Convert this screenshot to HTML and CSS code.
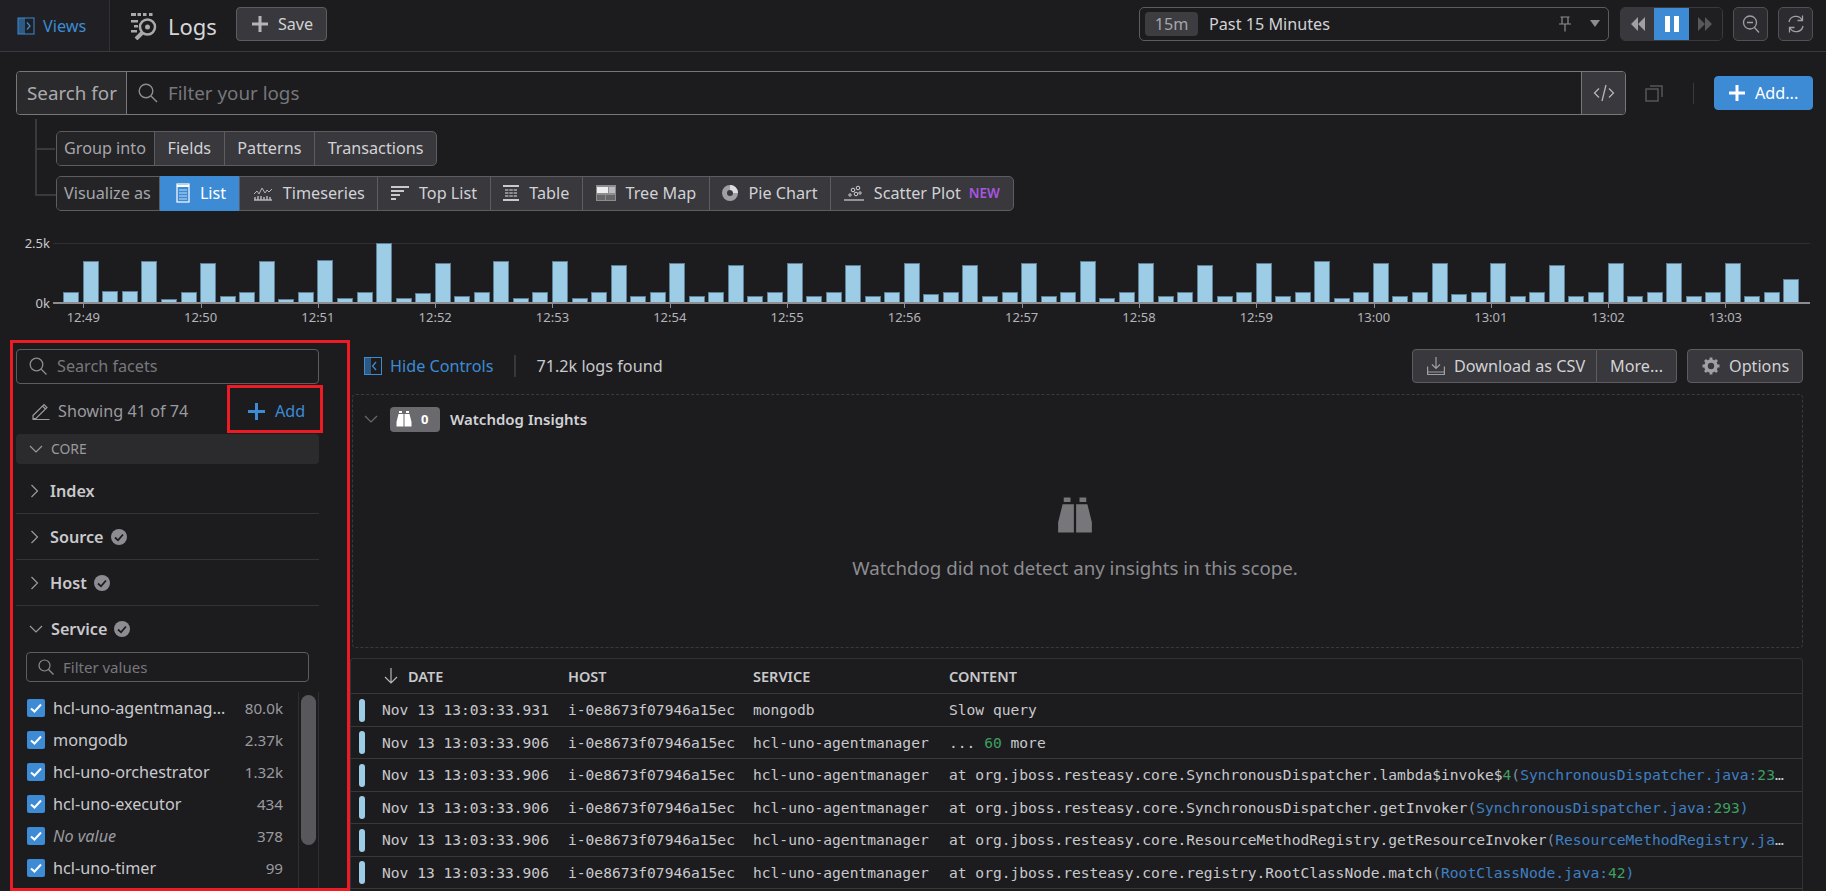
FILE: index.html
```html
<!DOCTYPE html>
<html lang="en">
<head>
<meta charset="utf-8">
<title>Logs</title>
<link rel="stylesheet" href="styles.css">
</head>
<body>
<header class="topbar">
  <a class="views">
    <svg class="ic" width="18" height="18" viewBox="0 0 18 18"><rect x="1" y="1" width="16" height="16" fill="none" stroke="#3d8bd4"/><rect x="1" y="1" width="7" height="16" fill="#3d8bd4" opacity=".55"/><path d="M10 5.500l3 3.500-3 3.500" fill="none" stroke="#3d8bd4" stroke-width="1.300"/></svg>
    <span>Views</span>
  </a>
  <div class="title">
    <svg width="28" height="28" viewBox="0 0 28 28" fill="#a9a9ad"><rect x="1" y="1" width="5" height="3"/><rect x="7.500" y="1" width="3.500" height="3"/><rect x="13" y="1" width="3.500" height="3"/><rect x="19" y="1" width="3.500" height="3"/><rect x="1" y="8" width="7" height="2.500"/><rect x="4" y="13" width="4" height="2.500"/><rect x="1" y="18" width="6" height="2.500"/><circle cx="17.500" cy="15" r="7.500" fill="none" stroke="#a9a9ad" stroke-width="2.500"/><circle cx="17.500" cy="15" r="2.500"/><path d="M12 21l-6 6" stroke="#a9a9ad" stroke-width="4"/></svg>
    <h1>Logs</h1>
  </div>
  <button class="btn save"><svg width="18" height="18" viewBox="0 0 18 18"><path d="M9 1v16M1 9h16" stroke="#b5b5b8" stroke-width="3"/></svg>Save</button>
  <div class="spacer"></div>
  <div class="timepicker">
    <span class="pill">15m</span>
    <span class="tp-text">Past 15 Minutes</span>
    <svg width="14" height="16" viewBox="0 0 14 16"><path d="M2.500 1h9M4 1.500v6M10 1.500v6M1 8h12M7 8v7.500" fill="none" stroke="#8d8d91" stroke-width="1.200"/></svg>
    <span class="caret"></span>
  </div>
  <div class="transport">
    <span class="t-btn"><svg width="16" height="14" viewBox="0 0 16 14" fill="#a0a0a4"><path d="M8 0v14L1 7zM15 0v14L8 7z"/></svg></span>
    <span class="t-btn on"><svg width="14" height="16" viewBox="0 0 14 16" fill="#fff"><rect width="5" height="16"/><rect x="9" width="5" height="16"/></svg></span>
    <span class="t-btn off"><svg width="16" height="14" viewBox="0 0 16 14" fill="#58585c"><path d="M8 0v14l7-7zM1 0v14l7-7z"/></svg></span>
  </div>
  <span class="icon-btn"><svg width="18" height="20" viewBox="0 0 18 20" fill="none" stroke="#a0a0a4" stroke-width="1.300"><circle cx="8" cy="8.500" r="6.500"/><path d="M5 8.500h6M12.500 13.500l4.500 5"/></svg></span>
  <span class="icon-btn last"><svg width="18" height="20" viewBox="0 0 18 20" fill="none" stroke="#a0a0a4" stroke-width="1.300"><path d="M2 8a7 7 0 0 1 13-2M16 12a7 7 0 0 1-13 2M15.500 1.500V6.500H10.500M2.500 18.500V13.500H7.500"/></svg></span>
</header>

<section class="query">
  <div class="searchrow">
    <div class="searchbox">
      <span class="sb-label">Search for</span>
      <div class="sb-input">
        <svg width="20" height="20" viewBox="0 0 20 20" fill="none" stroke="#8d8d91" stroke-width="1.400"><circle cx="8" cy="8" r="6.800"/><path d="M13 13l6 6"/></svg>
        <span>Filter your logs</span>
      </div>
      <span class="sb-code"><svg width="22" height="18" viewBox="0 0 22 18" fill="none" stroke="#b5b5b8" stroke-width="1.300"><path d="M6 4.500L1.500 9 6 13.500M16 4.500L20.500 9 16 13.500M13 1L9 17"/></svg></span>
    </div>
    <svg class="copy" width="18" height="18" viewBox="0 0 18 18" fill="none" stroke="#55555a" stroke-width="1.500"><rect x="1" y="5" width="12" height="12"/><path d="M5 2h12v11"/></svg>
    <span class="vsep"></span>
    <button class="btn primary"><svg width="18" height="18" viewBox="0 0 18 18"><path d="M9 1v16M1 9h16" stroke="#fff" stroke-width="3"/></svg>Add...</button>
  </div>
  <div class="tree">
    <div class="seg">
      <span class="seg-label">Group into</span>
      <span class="seg-item">Fields</span>
      <span class="seg-item">Patterns</span>
      <span class="seg-item">Transactions</span>
    </div>
    <div class="seg">
      <span class="seg-label">Visualize as</span>
      <span class="seg-item on"><svg width="14" height="20" viewBox="0 0 14 20"><rect x="1" y="1" width="12" height="18" fill="none" stroke="#fff" stroke-width="1.200"/><path d="M1 3h12" stroke="#fff" stroke-width="2"/><path d="M3 7h8M3 10h8M3 13h8M3 16h8" stroke="#fff" stroke-opacity=".7"/></svg>List</span>
      <span class="seg-item"><svg width="20" height="16" viewBox="0 0 20 16"><path d="M1 9l3-3 2 3 3-6 3 5 2-3 2 2 3-3" fill="none" stroke="#b5b5b8"/><path d="M1 15h18M2 15v-3M5 15v-4M8 15v-4M11 15v-3M14 15v-4M17 15v-3" stroke="#b5b5b8" stroke-width="1.500"/></svg>Timeseries</span>
      <span class="seg-item"><svg width="18" height="16" viewBox="0 0 18 16"><path d="M0 2h18M0 6h13M0 10h9M0 14h5" stroke="#c9c9cc" stroke-width="2"/></svg>Top List</span>
      <span class="seg-item"><svg width="16" height="16" viewBox="0 0 16 16"><path d="M0 1h16M0 15h16" stroke="#c9c9cc" stroke-width="2"/><path d="M2 5h12M2 8h12M2 11h12" stroke="#8d8d91" stroke-width="2" stroke-dasharray="3.500 .8"/></svg>Table</span>
      <span class="seg-item"><svg width="20" height="16" viewBox="0 0 20 16"><rect width="20" height="16" fill="#8d8d91"/><rect x="1" y="2" width="11" height="6" fill="#eee"/><rect x="13" y="2" width="6" height="6" fill="#bbb"/><rect x="1" y="10" width="8" height="5" fill="#666"/><rect x="10" y="10" width="9" height="5" fill="#666"/></svg>Tree Map</span>
      <span class="seg-item"><svg width="16" height="16" viewBox="0 0 16 16"><circle cx="8" cy="8" r="5.500" fill="none" stroke="#a0a0a4" stroke-width="5"/><path d="M8 0a8 8 0 0 1 8 8h-5a3 3 0 0 0-3-3z" fill="#ddd"/></svg>Pie Chart</span>
      <span class="seg-item"><svg width="20" height="16" viewBox="0 0 20 16" fill="none" stroke="#d2d2d5"><path d="M0 15h20" stroke-width="1.200"/><circle cx="9" cy="5" r="1.800"/><circle cx="14" cy="3" r="1.800"/><circle cx="12" cy="9" r="1.800"/><circle cx="6" cy="10" r="1.200"/><circle cx="16" cy="8" r="1.200"/></svg>Scatter Plot<b class="new">NEW</b></span>
    </div>
  </div>
</section>

<section class="chart">
  <div class="plotwrap">
    <div class="yaxis"><span>2.5k</span><span>0k</span></div>
    <div class="plot">
      <div class="bar" style="height:10px"></div><div class="bar" style="height:41px"></div><div class="bar" style="height:11px"></div><div class="bar" style="height:11px"></div><div class="bar" style="height:41px"></div><div class="bar" style="height:3px"></div>
      <div class="bar" style="height:10px"></div><div class="bar" style="height:39px"></div><div class="bar" style="height:6px"></div><div class="bar" style="height:10px"></div><div class="bar" style="height:41px"></div><div class="bar" style="height:3px"></div>
      <div class="bar" style="height:10px"></div><div class="bar" style="height:42px"></div><div class="bar" style="height:4px"></div><div class="bar" style="height:10px"></div><div class="bar" style="height:59px"></div><div class="bar" style="height:4px"></div>
      <div class="bar" style="height:9px"></div><div class="bar" style="height:39px"></div><div class="bar" style="height:6px"></div><div class="bar" style="height:10px"></div><div class="bar" style="height:41px"></div><div class="bar" style="height:4px"></div>
      <div class="bar" style="height:10px"></div><div class="bar" style="height:41px"></div><div class="bar" style="height:4px"></div><div class="bar" style="height:10px"></div><div class="bar" style="height:37px"></div><div class="bar" style="height:6px"></div>
      <div class="bar" style="height:10px"></div><div class="bar" style="height:39px"></div><div class="bar" style="height:6px"></div><div class="bar" style="height:10px"></div><div class="bar" style="height:37px"></div><div class="bar" style="height:6px"></div>
      <div class="bar" style="height:10px"></div><div class="bar" style="height:39px"></div><div class="bar" style="height:6px"></div><div class="bar" style="height:10px"></div><div class="bar" style="height:37px"></div><div class="bar" style="height:6px"></div>
      <div class="bar" style="height:10px"></div><div class="bar" style="height:39px"></div><div class="bar" style="height:8px"></div><div class="bar" style="height:10px"></div><div class="bar" style="height:37px"></div><div class="bar" style="height:6px"></div>
      <div class="bar" style="height:10px"></div><div class="bar" style="height:39px"></div><div class="bar" style="height:6px"></div><div class="bar" style="height:10px"></div><div class="bar" style="height:41px"></div><div class="bar" style="height:4px"></div>
      <div class="bar" style="height:10px"></div><div class="bar" style="height:39px"></div><div class="bar" style="height:6px"></div><div class="bar" style="height:10px"></div><div class="bar" style="height:37px"></div><div class="bar" style="height:6px"></div>
      <div class="bar" style="height:10px"></div><div class="bar" style="height:39px"></div><div class="bar" style="height:6px"></div><div class="bar" style="height:10px"></div><div class="bar" style="height:41px"></div><div class="bar" style="height:4px"></div>
      <div class="bar" style="height:10px"></div><div class="bar" style="height:39px"></div><div class="bar" style="height:6px"></div><div class="bar" style="height:10px"></div><div class="bar" style="height:39px"></div><div class="bar" style="height:8px"></div>
      <div class="bar" style="height:10px"></div><div class="bar" style="height:39px"></div><div class="bar" style="height:6px"></div><div class="bar" style="height:10px"></div><div class="bar" style="height:37px"></div><div class="bar" style="height:6px"></div>
      <div class="bar" style="height:10px"></div><div class="bar" style="height:39px"></div><div class="bar" style="height:6px"></div><div class="bar" style="height:10px"></div><div class="bar" style="height:39px"></div><div class="bar" style="height:6px"></div>
      <div class="bar" style="height:10px"></div><div class="bar" style="height:39px"></div><div class="bar" style="height:6px"></div><div class="bar" style="height:10px"></div><div class="bar" style="height:23px"></div>
    </div>
  </div>
  <div class="ticks">
    <span>12:49</span><span>12:50</span><span>12:51</span><span>12:52</span><span>12:53</span><span>12:54</span><span>12:55</span><span>12:56</span><span>12:57</span><span>12:58</span><span>12:59</span><span>13:00</span><span>13:01</span><span>13:02</span><span>13:03</span>
  </div>
</section>

<main class="main">
  <aside class="facets">
    <div class="f-search">
      <svg width="18" height="18" viewBox="0 0 18 18" fill="none" stroke="#8d8d91" stroke-width="1.300"><circle cx="7.500" cy="7.500" r="6.300"/><path d="M12 12l5.500 5.500"/></svg>
      <span>Search facets</span>
    </div>
    <div class="f-head">
      <div class="f-showing">
        <svg width="18" height="18" viewBox="0 0 18 18" fill="none" stroke="#9a9a9e" stroke-width="1.200"><path d="M1 13.500L12 2.500l3 3L4 16.500H1zM10.500 4l3 3M.5 17.500h17"/></svg>
        <span>Showing 41 of 74</span>
      </div>
      <button class="f-add"><svg width="17" height="17" viewBox="0 0 17 17"><path d="M8.500 0v17M0 8.500h17" stroke="#3d8bd4" stroke-width="3"/></svg>Add</button>
    </div>
    <div class="f-group"><svg class="chev" width="14" height="14" viewBox="0 0 14 14"><path d="M1 4l6 6 6-6" fill="none" stroke="#9a9a9e" stroke-width="1.200"/></svg>CORE</div>
    <div class="facet first"><svg class="chevr" width="14" height="14" viewBox="0 0 14 14"><path d="M3.500 1l6 6-6 6" fill="none" stroke="#9a9a9e" stroke-width="1.200"/></svg><b>Index</b></div>
    <div class="facet"><svg class="chevr" width="14" height="14" viewBox="0 0 14 14"><path d="M3.500 1l6 6-6 6" fill="none" stroke="#9a9a9e" stroke-width="1.200"/></svg><b>Source</b><svg width="16" height="16" viewBox="0 0 16 16"><circle cx="8" cy="8" r="8" fill="#8d8d91"/><path d="M4 8.500l3 2.800 5-5.800" fill="none" stroke="#1c1c1f" stroke-width="1.800"/></svg></div>
    <div class="facet"><svg class="chevr" width="14" height="14" viewBox="0 0 14 14"><path d="M3.500 1l6 6-6 6" fill="none" stroke="#9a9a9e" stroke-width="1.200"/></svg><b>Host</b><svg width="16" height="16" viewBox="0 0 16 16"><circle cx="8" cy="8" r="8" fill="#8d8d91"/><path d="M4 8.500l3 2.800 5-5.800" fill="none" stroke="#1c1c1f" stroke-width="1.800"/></svg></div>
    <div class="facet open"><svg class="chev" width="14" height="14" viewBox="0 0 14 14"><path d="M1 4l6 6 6-6" fill="none" stroke="#9a9a9e" stroke-width="1.200"/></svg><b>Service</b><svg width="16" height="16" viewBox="0 0 16 16"><circle cx="8" cy="8" r="8" fill="#8d8d91"/><path d="M4 8.500l3 2.800 5-5.800" fill="none" stroke="#1c1c1f" stroke-width="1.800"/></svg></div>
    <div class="f-filter">
      <svg width="16" height="16" viewBox="0 0 16 16" fill="none" stroke="#8d8d91" stroke-width="1.200"><circle cx="6.500" cy="6.500" r="5.500"/><path d="M10.500 10.500l5 5"/></svg>
      <span>Filter values</span>
    </div>
    <div class="f-values">
      <ul class="f-list">
        <li><span class="cb"><svg width="18" height="18" viewBox="0 0 18 18"><path d="M4 9.500l3.500 3L14 5.500" fill="none" stroke="#fff" stroke-width="2"/></svg></span><span class="name">hcl-uno-agentmanager</span><span class="count">80.0k</span></li>
        <li><span class="cb"><svg width="18" height="18" viewBox="0 0 18 18"><path d="M4 9.500l3.500 3L14 5.500" fill="none" stroke="#fff" stroke-width="2"/></svg></span><span class="name">mongodb</span><span class="count">2.37k</span></li>
        <li><span class="cb"><svg width="18" height="18" viewBox="0 0 18 18"><path d="M4 9.500l3.500 3L14 5.500" fill="none" stroke="#fff" stroke-width="2"/></svg></span><span class="name">hcl-uno-orchestrator</span><span class="count">1.32k</span></li>
        <li><span class="cb"><svg width="18" height="18" viewBox="0 0 18 18"><path d="M4 9.500l3.500 3L14 5.500" fill="none" stroke="#fff" stroke-width="2"/></svg></span><span class="name">hcl-uno-executor</span><span class="count">434</span></li>
        <li><span class="cb"><svg width="18" height="18" viewBox="0 0 18 18"><path d="M4 9.500l3.500 3L14 5.500" fill="none" stroke="#fff" stroke-width="2"/></svg></span><span class="name novalue">No value</span><span class="count">378</span></li>
        <li><span class="cb"><svg width="18" height="18" viewBox="0 0 18 18"><path d="M4 9.500l3.500 3L14 5.500" fill="none" stroke="#fff" stroke-width="2"/></svg></span><span class="name">hcl-uno-timer</span><span class="count">99</span></li>
      </ul>
      <div class="f-rail"><div class="f-thumb"></div></div>
    </div>
  </aside>

  <div class="results">
    <div class="r-bar">
      <a class="hide"><svg width="18" height="18" viewBox="0 0 18 18"><rect x=".5" y=".5" width="17" height="17" fill="none" stroke="#3d8bd4"/><rect x="1" y="1" width="6" height="16" fill="#3d8bd4" opacity=".55"/><path d="M12 5l-3.500 4 3.500 4" fill="none" stroke="#3d8bd4" stroke-width="1.300"/></svg>Hide Controls</a>
      <span class="r-sep"></span>
      <span class="found">71.2k logs found</span>
      <div class="spacer"></div>
      <div class="split">
        <button class="btn"><svg width="18" height="18" viewBox="0 0 18 18" fill="none" stroke="#a0a0a4" stroke-width="1.200"><path d="M9 0v11M5 7.500l4 4 4-4M.6 9.500v8h16.800v-8M.6 15h16.800"/></svg>Download as CSV</button>
        <button class="btn">More...</button>
      </div>
      <button class="btn"><svg width="18" height="18" viewBox="0 0 18 18"><circle cx="9" cy="9" r="5" fill="none" stroke="#a0a0a4" stroke-width="3.600"/><path d="M9 .5v17M.5 9h17M3 3l12 12M15 3L3 15" stroke="#a0a0a4" stroke-width="2.800" stroke-dasharray="2.800 11.500"/></svg>Options</button>
    </div>
    <section class="insights">
      <div class="ins-head">
        <svg width="14" height="14" viewBox="0 0 14 14"><path d="M1 4l6 6 6-6" fill="none" stroke="#6a6a6e" stroke-width="1.200"/></svg>
        <span class="ins-badge"><svg width="16" height="16" viewBox="0 0 16 16" fill="#fff"><path d="M3 0h3v2H3zM10 0h3v2h-3zM2.500 3h5v12.500H.5V11zM8.500 3h5l2 8v4.500h-7z"/></svg>0</span>
        <b>Watchdog Insights</b>
      </div>
      <div class="ins-empty">
        <svg width="36" height="37" viewBox="0 0 16 16" fill="#77777b"><path d="M3 0h3v2H3zM10 0h3v2h-3zM2.500 3h5v12.500H.5V11zM8.500 3h5l2 8v4.500h-7z"/></svg>
        <p>Watchdog did not detect any insights in this scope.</p>
      </div>
    </section>
    <section class="table">
      <div class="row head"><span class="h-date"><svg width="14" height="16" viewBox="0 0 14 16" fill="none" stroke="#b5b5b8" stroke-width="1.200"><path d="M7 0v15M1 9l6 6 6-6"/></svg>DATE</span><span>HOST</span><span>SERVICE</span><span>CONTENT</span></div>
      <div class="row log"><i class="st"></i><span>Nov 13 13:03:33.931</span><span>i-0e8673f07946a15ec</span><span>mongodb</span><span class="msg">Slow query</span></div>
      <div class="row log"><i class="st"></i><span>Nov 13 13:03:33.906</span><span>i-0e8673f07946a15ec</span><span>hcl-uno-agentmanager</span><span class="msg">... <em class="num">60</em> more</span></div>
      <div class="row log"><i class="st"></i><span>Nov 13 13:03:33.906</span><span>i-0e8673f07946a15ec</span><span>hcl-uno-agentmanager</span><span class="msg">at org.jboss.resteasy.core.SynchronousDispatcher.lambda$invoke$<em class="num">4</em><em class="par">(</em><em class="cls">SynchronousDispatcher.java:</em><em class="num">236</em><em class="cls">)</em></span></div>
      <div class="row log"><i class="st"></i><span>Nov 13 13:03:33.906</span><span>i-0e8673f07946a15ec</span><span>hcl-uno-agentmanager</span><span class="msg">at org.jboss.resteasy.core.SynchronousDispatcher.getInvoker<em class="par">(</em><em class="cls">SynchronousDispatcher.java:</em><em class="num">293</em><em class="cls">)</em></span></div>
      <div class="row log"><i class="st"></i><span>Nov 13 13:03:33.906</span><span>i-0e8673f07946a15ec</span><span>hcl-uno-agentmanager</span><span class="msg">at org.jboss.resteasy.core.ResourceMethodRegistry.getResourceInvoker<em class="par">(</em><em class="cls">ResourceMethodRegistry.java:</em><em class="num">114</em><em class="cls">)</em></span></div>
      <div class="row log"><i class="st"></i><span>Nov 13 13:03:33.906</span><span>i-0e8673f07946a15ec</span><span>hcl-uno-agentmanager</span><span class="msg">at org.jboss.resteasy.core.registry.RootClassNode.match<em class="par">(</em><em class="cls">RootClassNode.java:</em><em class="num">42</em><em class="cls">)</em></span></div>
    </section>
  </div>
</main>
</body>
</html>
```

FILE: styles.css
```css
* { box-sizing: border-box; }
html, body { margin: 0; padding: 0; }
body {
  width: 1826px; height: 891px; overflow: hidden;
  background: #1c1c1f; color: #c9c9cc;
  font-family: "Noto Sans", sans-serif; font-size: 16.2px; line-height: 20px;
}
h1, p, ul { margin: 0; padding: 0; }
ul { list-style: none; }
em { font-style: normal; }
svg { display: block; flex: none; }
.spacer { flex: 1; }
button { font: inherit; color: inherit; cursor: pointer; }

.btn {
  display: inline-flex; align-items: center; gap: 9px;
  height: 34px; padding: 0 14px;
  background: #38383d; border: 1px solid #5c5c61; border-radius: 4px; color: #d2d2d5;
}

/* top bar */
.topbar { display: flex; align-items: center; height: 52px; border-bottom: 1px solid #3a3a3e; padding-right: 13px; }
.views { display: flex; align-items: center; gap: 8px; width: 110px; height: 51px; padding-left: 17px; background: #1f1f24; border-right: 1px solid #323236; color: #3d8bd4; }
.title { display: flex; align-items: center; gap: 10px; margin-left: 20px; color: #d6d6d9; }
.title h1 { font-size: 22px; font-weight: 400; }
.save { margin-left: 19px; width: 91px; padding: 0 14px; margin-top: -4px; }
.timepicker { display: flex; align-items: center; width: 470px; height: 34px; margin-top: -4px; padding: 0 8px 0 5px; border: 1px solid #5c5c61; border-radius: 5px; }
.pill { width: 53px; height: 24px; line-height: 24px; text-align: center; background: #3c3c41; border-radius: 4px; color: #a6a6aa; }
.tp-text { flex: 1; margin-left: 11px; color: #d2d2d5; }
.caret { width: 0; height: 0; margin-left: 18px; border: 5.500px solid transparent; border-top: 7px solid #8d8d91; border-bottom: 0; }
.transport { display: flex; width: 103px; height: 34px; margin: -4px 0 0 11px; border: 1px solid #3a3a3e; border-radius: 5px; overflow: hidden; }
.t-btn { display: flex; align-items: center; justify-content: center; width: 34px; background: #38383d; }
.t-btn.on { width: 35px; background: #3d8bd4; }
.t-btn.off { background: #1f1f22; }
.icon-btn { display: flex; align-items: center; justify-content: center; width: 35px; height: 34px; margin: -4px 0 0 10px; background: #2c2c30; border: 1px solid #505055; border-radius: 5px; }

/* query */
.query { padding: 19px 13px 0 16px; height: 191px; }
.searchrow { display: flex; align-items: center; }
.searchbox { display: flex; width: 1610px; height: 44px; border: 1px solid #77777b; border-radius: 4px; }
.sb-label { display: flex; align-items: center; width: 110px; padding-left: 10px; font-size: 18.8px; background: #2a2a2d; border-right: 1px solid #77777b; border-radius: 3px 0 0 3px; color: #aaaaae; }
.sb-input { flex: 1; display: flex; align-items: center; gap: 10px; padding-left: 11px; font-size: 18.8px; color: #77777b; }
.sb-code { display: flex; align-items: center; justify-content: center; width: 44px; background: #38383d; border-left: 1px solid #77777b; border-radius: 0 3px 3px 0; }
.copy { margin-left: 19px; }
.vsep { width: 1px; height: 21px; margin-left: 30px; background: #3a3a3e; }
.primary { width: 99px; margin-left: 20px; padding: 0 0 0 13px; gap: 9px; background: #3d8bd4; border-color: #3d8bd4; color: #fff; }

.tree { position: relative; margin: 16px 0 0 40px; display: flex; flex-direction: column; gap: 10px; align-items: flex-start; }
.tree::before { content: ""; position: absolute; left: -21px; top: -12px; width: 19px; height: 75px; border-left: 2px solid #3a3a3e; border-bottom: 2px solid #3a3a3e; }
.seg { position: relative; display: flex; height: 35px; border: 1px solid #5c5c61; border-radius: 5px; background: #38383d; }
.seg:first-child::before { content: ""; position: absolute; left: -20px; top: 16px; width: 18px; height: 2px; background: #3a3a3e; }
.seg-label { display: flex; align-items: center; padding: 0 8px 1px 7px; color: #a6a6aa; background: #242427; border-right: 1px solid #5c5c61; border-radius: 4px 0 0 4px; }
.seg-item { display: flex; align-items: center; gap: 10px; padding: 0 12.6px 1px; color: #d2d2d5; border-right: 1px solid #5c5c61; }
.seg-item:last-child { border-right: 0; border-radius: 0 4px 4px 0; }
.seg-item.on { background: #3d8bd4; color: #fff; padding: 0 13px 1px 16px; margin: -1px 0; }
.new { margin-left: -2px; color: #a855e0; font-size: 13.5px; font-weight: 600; }

/* chart */
.chart { height: 97px; }
.plotwrap { display: flex; }
.yaxis { display: flex; flex-direction: column; justify-content: space-between; width: 53px; height: 80px; margin: -10px 0 -9px; padding-right: 3px; text-align: right; font-size: 13px; line-height: 20px; color: #c9c9cc; }
.plot { display: flex; align-items: flex-end; gap: 3.550px; width: 1757px; height: 61px; padding-left: 10.300px; border-top: 1px solid #2f2f33; border-bottom: 2px solid #8d8d91; }
.bar { width: 16px; background: #9ccce6; border: 1px solid #5e8097; border-bottom: 0; }
.ticks { display: flex; padding-left: 24.650px; }
.ticks span { position: relative; width: 117.300px; padding-top: 4px; text-align: center; font-size: 13px; line-height: 18px; color: #b4b4b8; }
.ticks span::before { content: ""; position: absolute; left: 50%; top: 0; width: 1px; height: 4px; background: #8d8d91; }

/* main */
.main { display: flex; height: 551px; }
.facets { width: 340px; height: 551px; margin-left: 10px; padding: 6px 28px 0 3px; border: 3px solid #ed1c24; overflow: hidden; }
.f-search { display: flex; align-items: center; gap: 10px; height: 35px; padding: 0 0 1px 12px; border: 1px solid #5c5c61; border-radius: 4px; color: #77777b; }
.f-head { display: flex; justify-content: space-between; margin-top: 1px; margin-right: -4px; }
.f-showing { display: flex; align-items: center; gap: 8px; padding: 4px 0 0 16px; color: #9a9a9e; }
.f-add { display: flex; align-items: center; gap: 10px; width: 96px; height: 48px; padding: 4px 0 0 18px; background: none; border: 3px solid #ed1c24; color: #3d8bd4; }
.f-group { display: flex; align-items: center; gap: 8px; height: 30px; margin-top: 1px; padding-left: 13px; background: #2b2b2e; border-radius: 4px; font-size: 13.9px; color: #9a9a9e; }
.facet { display: flex; align-items: center; gap: 8px; height: 46px; padding-left: 12px; border-bottom: 1px solid #343438; color: #c9c9cc; }
.facet.first { margin-top: 4px; }
.facet.open { border-bottom: 0; }
.facet b { font-weight: 600; margin-right: -1px; }
.facet .chev { margin-left: 1px; }
.f-filter { display: flex; align-items: center; gap: 9px; width: 283px; height: 30px; margin-left: 10px; padding-left: 11px; border: 1px solid #5c5c61; border-radius: 4px; font-size: 15px; color: #77777b; }
.f-values { display: flex; height: 200px; margin-top: 10px; }
.f-list { width: 282px; }
.f-list li { display: flex; align-items: center; height: 32px; padding: 0 15px 0 11px; }
.cb { width: 18px; height: 18px; background: #3d8bd4; border-radius: 2px; margin-right: 8px; flex: none; }
.name { flex: none; width: 174px; white-space: nowrap; overflow: hidden; text-overflow: ellipsis; color: #c9c9cc; font-size: 16.2px; }
.novalue { font-style: italic; color: #9a9a9e; }
.count { flex: 1; text-align: right; font-size: 15.2px; color: #9a9a9e; }
.f-rail { width: 21px; padding: 3px 2px; border-left: 1px solid #2f2f33; border-right: 1px solid #2f2f33; }
.f-thumb { width: 15px; height: 150px; background: #58585c; border-radius: 8px; }

/* results */
.results { flex: 1; min-width: 0; padding: 9px 23px 0 0; }
.r-bar { display: flex; align-items: center; gap: 10px; height: 34px; padding-left: 14px; }
.hide { display: flex; align-items: center; gap: 8px; color: #3d8bd4; }
.r-sep { width: 2px; height: 22px; margin-left: 11px; background: #38383c; }
.found { margin-left: 10px; color: #c9c9cc; }
.split { display: flex; }
.split .btn { border-radius: 4px 0 0 4px; width: 185px; padding: 0 0 0 14px; }
.split .btn + .btn { width: 80px; border-left: 0; border-radius: 0 4px 4px 0; padding: 0 0 0 13px; }
.r-bar > .btn { width: 116px; padding-left: 14px; }

.insights { height: 254px; margin: 11px 0 0 2px; border: 1px dashed #3a3a3e; border-radius: 4px; }
.ins-head { display: flex; align-items: center; height: 26px; margin-top: 11px; padding-left: 11px; }
.ins-badge { display: flex; align-items: center; gap: 9px; width: 50px; height: 25px; margin-left: 12px; padding-left: 6px; background: #6a6a6e; border-radius: 4px; color: #fff; font-size: 13px; font-weight: 700; }
.ins-head b { margin-left: 10px; font-size: 15px; font-weight: 600; color: #d2d2d5; }
.ins-empty { display: flex; flex-direction: column; align-items: center; gap: 22px; margin-top: 65px; padding-right: 5px; }
.ins-empty p { font-size: 18.7px; color: #8d8d91; line-height: 24px; }

.table { height: 240px; margin-top: 10px; border: 1px solid #323236; border-bottom: 0; border-radius: 4px 4px 0 0; overflow: hidden; }
.row { display: grid; grid-template-columns: 31px 186px 185px 196px minmax(0, 1fr); align-items: center; border-bottom: 1px solid #38383c; }
.head { height: 35px; grid-template-columns: 217px 185px 196px minmax(0, 1fr); font-size: 14.5px; font-weight: 600; color: #c9c9cc; }
.h-date { display: flex; align-items: center; gap: 10px; padding-left: 33px; }
.log { height: 32.500px; padding-top: 1px; font-family: "DejaVu Sans Mono", monospace; font-size: 14.600px; color: #c9c9cc; }
.log > span { white-space: nowrap; overflow: hidden; }
.st { width: 6px; height: 23px; margin-left: 8px; background: #9ccce6; border-radius: 3px; }
.msg { padding-right: 12px; text-overflow: ellipsis; }
.num { color: #3f9f5f; }
.cls { color: #3f80c4; }
.par { color: #7f8f9f; }
```
